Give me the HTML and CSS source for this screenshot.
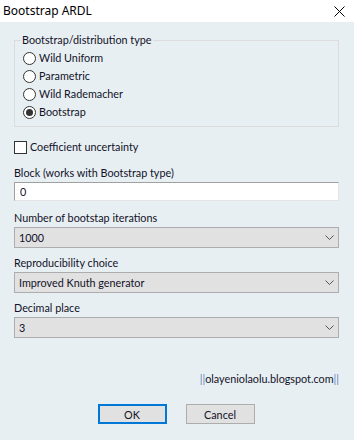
FILE: index.html
```html
<!DOCTYPE html>
<html lang="en">
  <head>
    <meta charset="UTF-8" />
    <meta name="viewport" content="width=device-width, initial-scale=1.0" />
    <title>Bootstrap ARDL</title>
    <link rel="stylesheet" href="styles.css">
  </head>
  <body>
    <div class="titlebar">
      <span class="title">Bootstrap ARDL</span>
      <svg class="close" width="11" height="11" viewBox="0 0 11 11">
        <path d="M0.5 0.5 L10.5 10.5 M10.5 0.5 L0.5 10.5" stroke="#000" stroke-width="1" fill="none" />
      </svg>
    </div>

    <div class="content">
      <fieldset class="group">
        <legend>Bootstrap/distribution type</legend>
        <label class="option"><span class="radio"></span>Wild Uniform</label>
        <label class="option"><span class="radio"></span>Parametric</label>
        <label class="option"><span class="radio"></span>Wild Rademacher</label>
        <label class="option"><span class="radio checked"></span>Bootstrap</label>
      </fieldset>

      <label class="option check-row"><span class="checkbox"></span>Coefficient uncertainty</label>

      <p class="field-label first">Block (works with Bootstrap type)</p>
      <input class="text-input" type="text" value="0" />

      <p class="field-label iterations">Number of bootstap iterations</p>
      <div class="combo">
        <span>1000</span>
        <svg width="9" height="5" viewBox="0 0 9 5"><path d="M0.5 0.5 L4.5 4.5 L8.5 0.5" stroke="#555" fill="none" /></svg>
      </div>

      <p class="field-label">Reproducibility choice</p>
      <div class="combo">
        <span>Improved Knuth generator</span>
        <svg width="9" height="5" viewBox="0 0 9 5"><path d="M0.5 0.5 L4.5 4.5 L8.5 0.5" stroke="#555" fill="none" /></svg>
      </div>

      <p class="field-label">Decimal place</p>
      <div class="combo">
        <span>3</span>
        <svg width="9" height="5" viewBox="0 0 9 5"><path d="M0.5 0.5 L4.5 4.5 L8.5 0.5" stroke="#555" fill="none" /></svg>
      </div>

      <p class="link"><span class="bars">||</span>olayeniolaolu.blogspot.com<span class="bars">||</span></p>

      <div class="buttons">
        <button class="btn default">OK</button>
        <button class="btn">Cancel</button>
      </div>
    </div>
  </body>
</html>
```

FILE: styles.css
```css
* {
  font-family: Lato, "Noto Sans", sans-serif;
  margin: 0;
  padding: 0;
  box-sizing: border-box;
}

body {
  width: 354px;
  height: 440px;
  background-color: #e8eff3;
  color: #111128;
  font-size: 10.8px;
  overflow: hidden;
}

.titlebar {
  height: 22px;
  background: #fff;
  display: flex;
  justify-content: space-between;
  align-items: center;
  padding: 0 9px 0 3px;
}

.title {
  font-family: "Noto Sans", sans-serif;
  color: #000;
  font-size: 12px;
  line-height: 22px;
}

.close {
  display: block;
  margin-top: 1px;
}

.content {
  padding: 0 15px 0 14px;
}

.group {
  margin-top: 10px;
  border: 1px solid #dcdcdc;
  padding: 1px 0 5px 8px;
}

.group legend {
  line-height: 16px;
  padding: 0 1px;
  margin-left: -2px;
}

.option {
  display: flex;
  align-items: center;
  height: 18px;
  line-height: 16px;
}

.radio {
  width: 13px;
  height: 13px;
  border: 1px solid #333;
  border-radius: 50%;
  background: #fff;
  margin-right: 3px;
  display: flex;
  justify-content: center;
  align-items: center;
}

.radio.checked::after {
  content: "";
  width: 7px;
  height: 7px;
  border-radius: 50%;
  background: #333;
}

.check-row {
  margin-top: 12px;
  height: 16px;
}

.checkbox {
  width: 13px;
  height: 13px;
  border: 1px solid #333;
  background: #fff;
  margin-right: 3px;
}

.field-label {
  line-height: 16px;
  margin-top: 7px;
}

.field-label.first {
  margin-top: 10px;
}

.field-label.iterations {
  margin-top: 9px;
}

.text-input {
  display: block;
  width: 100%;
  height: 19px;
  margin-top: 1px;
  border: 1px solid;
  border-color: #a0a0a0 #e3e3e3 #e3e3e3 #a0a0a0;
  background: #fff;
  padding: 0 5px;
  font-size: 10.8px;
  color: #111128;
  outline: none;
}

.combo {
  display: flex;
  justify-content: space-between;
  align-items: center;
  height: 21px;
  margin-top: 1px;
  background: #e1e1e1;
  border: 1px solid #adadad;
  padding: 0 4px 0 4px;
}

.combo svg {
  display: block;
}

.link {
  margin-top: 33px;
  text-align: right;
  line-height: 16px;
}

.bars {
  color: #5a86b8;
}

.buttons {
  display: flex;
  justify-content: center;
  gap: 19px;
  margin-top: 17px;
  padding-right: 1px;
}

.btn {
  width: 69px;
  height: 20px;
  background: #e1e1e1;
  border: 1px solid #adadad;
  font-size: 10.8px;
  color: #111128;
}

.btn.default {
  border: 2px solid #0078d7;
}
```
